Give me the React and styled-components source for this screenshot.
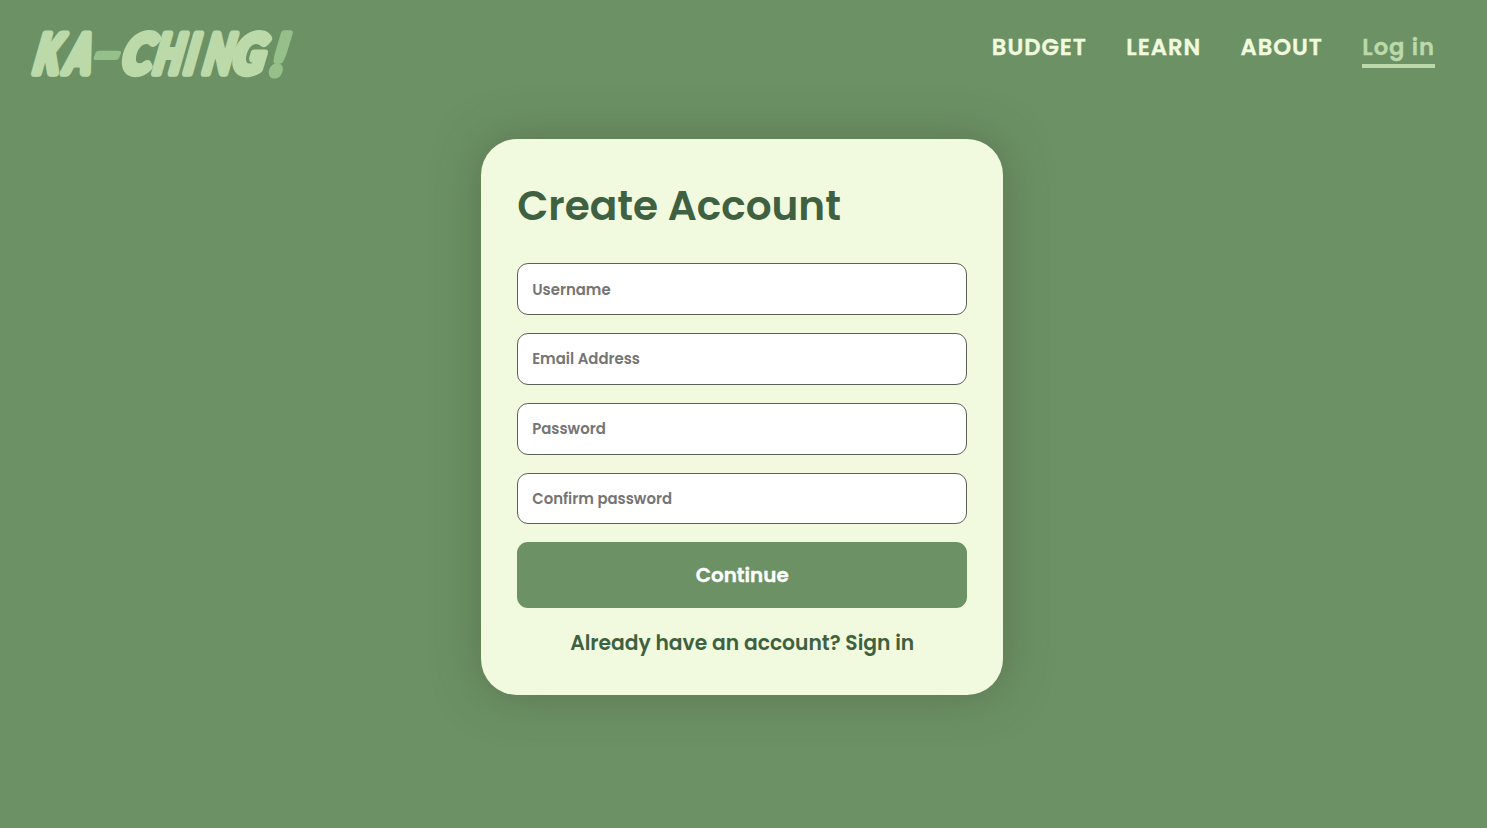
import React, { useState } from 'react'
import styled, { createGlobalStyle } from 'styled-components'

const GlobalStyle = createGlobalStyle`
    * {
        box-sizing: border-box;
    }

    body {
        margin: 0;
        min-height: 100vh;
        background: #6b9165;
        font-family: 'Poppins', 'Inter', 'Liberation Sans', sans-serif;
        overflow: hidden;
    }
`;

const Header = styled.header`
    display: flex;
    justify-content: space-between;
    align-items: flex-start;
    height: 139.4px;
    padding: 20px 52px 0 20px;
`;

const LogoLink = styled.a`
    display: block;
    line-height: 0;
`;

const LogoSvg = styled.svg`
    display: block;
    overflow: visible;
    fill: #bcd9a9;
    stroke: #bcd9a9;
    font-family: 'Lato', 'Liberation Sans', sans-serif;
    font-size: 53.5px;
    font-weight: 900;
    font-style: italic;

    .accent {
        fill: #96c08a;
        stroke: #96c08a;
    }
`;

const Nav = styled.nav`
    display: flex;
    gap: 39.5px;
    padding-top: 11px;
`;

const NavLink = styled.a`
    height: 37px;
    color: ${({ $active }) => ($active ? '#bcd9a9' : '#f1fade')};
    border-bottom: ${({ $active }) => ($active ? '4px solid #bcd9a9' : 'none')};
    font-size: 22.7px;
    font-weight: 600;
    line-height: 33px;
    letter-spacing: 0.95px;
    text-decoration: none;
    white-space: nowrap;
    -webkit-text-stroke: 0.35px currentColor;
`;

const Main = styled.main`
    display: flex;
    justify-content: center;
    padding-right: 2.6px;
`;

const Card = styled.form`
    display: flex;
    flex-direction: column;
    gap: 18px;
    width: 522px;
    height: 555.2px;
    padding: 36px;
    border-radius: 36px;
    background: #f1fade;
    box-shadow: 0 0 45px rgba(80, 90, 60, 0.5);
`;

const Title = styled.h1`
    flex: none;
    height: 69.8px;
    margin: 0;
    color: #3f6141;
    font-size: 40.6px;
    font-weight: 600;
    line-height: 62px;
    white-space: nowrap;
`;

const Field = styled.input`
    flex: none;
    width: 100%;
    height: 51.8px;
    padding: 1px 14px 0;
    border: 1px solid #5c6158;
    border-radius: 11px;
    background: #fff;
    color: #3f6141;
    font-family: inherit;
    font-size: 14.9px;
    font-weight: 600;
    outline: none;

    &::placeholder {
        color: #757575;
        opacity: 1;
    }
`;

const SubmitButton = styled.button`
    flex: none;
    height: 65.8px;
    border: none;
    border-radius: 11px;
    background: #6b9165;
    color: #fff;
    font-family: inherit;
    font-size: 19.9px;
    font-weight: 600;
    cursor: pointer;
    -webkit-text-stroke: 0.35px currentColor;
`;

const SignIn = styled.p`
    margin: 0;
    color: #3f6141;
    font-size: 20.25px;
    font-weight: 600;
    line-height: 34px;
    text-align: center;
    white-space: nowrap;

    a {
        color: inherit;
        text-decoration: none;
    }
`;

const links = [
    { label: 'BUDGET' },
    { label: 'LEARN' },
    { label: 'ABOUT' },
    { label: 'Log in', active: true },
]

const fields = [
    { name: 'username', type: 'text', placeholder: 'Username' },
    { name: 'email', type: 'email', placeholder: 'Email Address' },
    { name: 'password', type: 'password', placeholder: 'Password' },
    { name: 'confirm', type: 'password', placeholder: 'Confirm password' },
]

function Logo() {
    return (
        <LogoLink href="#">
            <LogoSvg width="280" height="64" viewBox="0 0 280 64" strokeWidth="7.5" strokeLinejoin="round">
                <g transform="translate(0 52.6) skewX(-11) scale(0.72 1)">
                    <text x="17.5 61">KA</text>
                    <text className="accent" transform="translate(98 -3) scale(2 0.9)" strokeWidth="4.5">-</text>
                    <text>
                        <tspan x="140" textLength="41" lengthAdjust="spacingAndGlyphs">C</tspan>
                        <tspan x="184 227 253">HIN</tspan>
                        <tspan x="293" textLength="44" lengthAdjust="spacingAndGlyphs">G</tspan>
                    </text>
                    <text className="accent" transform="translate(347 2) scale(1.3 1.07)" strokeWidth="6">!</text>
                </g>
            </LogoSvg>
        </LogoLink>
    )
}

export default function App() {
    const [values, setValues] = useState({ username: '', email: '', password: '', confirm: '' })

    const handleChange = (e) => {
        setValues({ ...values, [e.target.name]: e.target.value })
    }

    return (
        <>
            <GlobalStyle />
            <Header>
                <Logo />
                <Nav>
                    {links.map((link) => (
                        <NavLink key={link.label} href="#" $active={link.active}>
                            {link.label}
                        </NavLink>
                    ))}
                </Nav>
            </Header>
            <Main>
                <Card onSubmit={(e) => e.preventDefault()}>
                    <Title>Create Account</Title>
                    {fields.map((field) => (
                        <Field key={field.name} {...field} value={values[field.name]} onChange={handleChange} />
                    ))}
                    <SubmitButton type="submit">Continue</SubmitButton>
                    <SignIn>
                        Already have an account? <a href="#">Sign in</a>
                    </SignIn>
                </Card>
            </Main>
        </>
    )
}
